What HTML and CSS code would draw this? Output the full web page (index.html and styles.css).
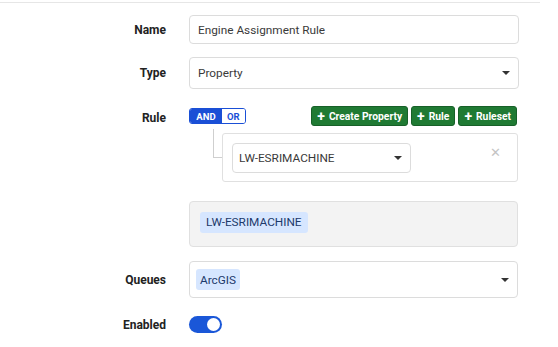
FILE: index.html
```html
<!DOCTYPE html>
<html>
<head>
<meta charset="utf-8">
<link rel="stylesheet" href="styles.css">
</head>
<body>
<div class="page">
  <div class="topline"></div>
  <div class="form">
    <div class="label l-name">Name</div>
    <div class="field">
      <div class="input input-name">Engine Assignment Rule</div>
    </div>

    <div class="label l-type">Type</div>
    <div class="field">
      <div class="input select input-type"><span>Property</span><span class="caret"></span></div>
    </div>

    <div class="label l-rule">Rule</div>
    <div class="field rule-field">
      <div class="rule-head">
        <div class="conj">
          <span class="conj-btn active">AND</span><span class="conj-btn">OR</span>
        </div>
        <div class="actions">
          <span class="gbtn"><span class="plus">+</span>Create Property</span>
          <span class="gbtn"><span class="plus">+</span>Rule</span>
          <span class="gbtn"><span class="plus">+</span>Ruleset</span>
        </div>
      </div>
      <div class="rule-body">
        <div class="connector"></div>
        <div class="rule-box">
          <div class="input select inner-select"><span>LW-ESRIMACHINE</span><span class="caret"></span></div>
          <span class="close">&#x2715;</span>
        </div>
      </div>
    </div>

    <div class="label"></div>
    <div class="field">
      <div class="preview"><span class="chip chip-lg">LW-ESRIMACHINE</span></div>
    </div>

    <div class="label l-queues">Queues</div>
    <div class="field">
      <div class="input select input-queues"><span class="chip">ArcGIS</span><span class="caret"></span></div>
    </div>

    <div class="label l-enabled">Enabled</div>
    <div class="field">
      <div class="toggle"><span class="knob"></span></div>
    </div>
  </div>
</div>
</body>
</html>
```

FILE: styles.css
```css
* { box-sizing: border-box; }
html, body { margin: 0; padding: 0; background: #fff; }
body {
  font-family: Roboto, "Liberation Sans", Arial, sans-serif;
  color: #333;
  width: 558px;
  height: 347px;
  overflow: hidden;
}
.page { padding-top: 2px; }
.topline {
  width: 540px;
  height: 1px;
  background: #e6e6e6;
}
.form {
  display: grid;
  grid-template-columns: 166px 330px;
  column-gap: 23px;
  align-items: center;
  margin-top: 12px;
}
.label {
  text-align: right;
  font-weight: bold;
  font-size: 12px;
  color: #222;
}
.field { display: flex; flex-direction: column; }
.input {
  border: 1px solid #dcdcdc;
  border-radius: 4px;
  background: #fff;
  font-size: 11.8px;
  color: #3a3a3a;
  display: flex;
  align-items: center;
  padding: 0 8px;
}
.input-name { height: 29px; }
.input-type { height: 32px; margin-top: 13px; }
.l-type { margin-top: 13px; }
.select { justify-content: space-between; }
.caret {
  width: 0; height: 0;
  border-left: 4px solid transparent;
  border-right: 4px solid transparent;
  border-top: 4px solid #333;
}
.l-rule { align-self: start; margin-top: 22px; }
.rule-field { margin-top: 17px; }
.rule-head {
  display: flex;
  justify-content: space-between;
  align-items: center;
  padding-right: 2px;
}
.conj {
  display: flex;
  border: 1px solid #1a4fd6;
  border-radius: 3px;
  overflow: hidden;
  height: 16px;
}
.conj-btn {
  font-size: 9.5px;
  font-weight: bold;
  color: #1a4fd6;
  background: #fff;
  padding: 0 5px;
  display: flex;
  align-items: center;
}
.conj-btn.active { background: #1a4fd6; color: #fff; width: 32px; justify-content: center; }
.actions { display: flex; gap: 3px; }
.gbtn {
  background: #1f7a33;
  color: #fff;
  font-size: 10.3px;
  font-weight: bold;
  height: 20px;
  padding: 0 5px;
  border-radius: 3px;
  display: flex;
  align-items: center;
  border: 1px solid #176028;
}
.plus {
  font-size: 14px;
  font-weight: bold;
  margin-right: 4px;
  line-height: 1;
  margin-top: -1px;
}
.rule-body {
  display: flex;
  margin-top: 7px;
}
.connector {
  width: 9px;
  height: 29px;
  margin-left: 24px;
  margin-top: -4px;
  border-left: 1px solid #cfcfcf;
  border-bottom: 1px solid #cfcfcf;
  flex: none;
}
.rule-box {
  flex: 1;
  height: 49px;
  border: 1px solid #e0e0e0;
  border-radius: 3px;
  display: flex;
  align-items: flex-start;
  justify-content: space-between;
  padding: 9px 16px 0 9px;
  margin-right: 1px;
}
.inner-select { width: 179px; height: 30px; padding: 0 8px 0 6px; }
.close { color: #c4c4c4; font-size: 13px; margin-top: 2px; }
.preview {
  margin-top: 19px;
  height: 46px;
  background: #f3f3f3;
  border: 1px solid #e0e0e0;
  border-radius: 4px;
  margin-right: 1px;
  padding: 9px 0 0 10px;
}
.chip {
  background: #d6e6ff;
  color: #1d3a6b;
  font-size: 11.8px;
  border-radius: 3px;
  padding: 0 4px;
  height: 21px;
  display: inline-flex;
  align-items: center;
}
.chip-lg { padding: 0 6px; height: 21px; }
.input-queues { height: 37px; margin-top: 14px; padding: 0 8px 0 6px; margin-right: 1px; }
.l-queues { margin-top: 14px; }
.l-enabled { margin-top: 18px; }
.toggle {
  margin-top: 18px;
  width: 33px;
  height: 17px;
  border-radius: 9px;
  background: #1a57d8;
  position: relative;
}
.knob {
  position: absolute;
  right: 2px;
  top: 2px;
  width: 13px;
  height: 13px;
  border-radius: 50%;
  background: #fff;
}
```
